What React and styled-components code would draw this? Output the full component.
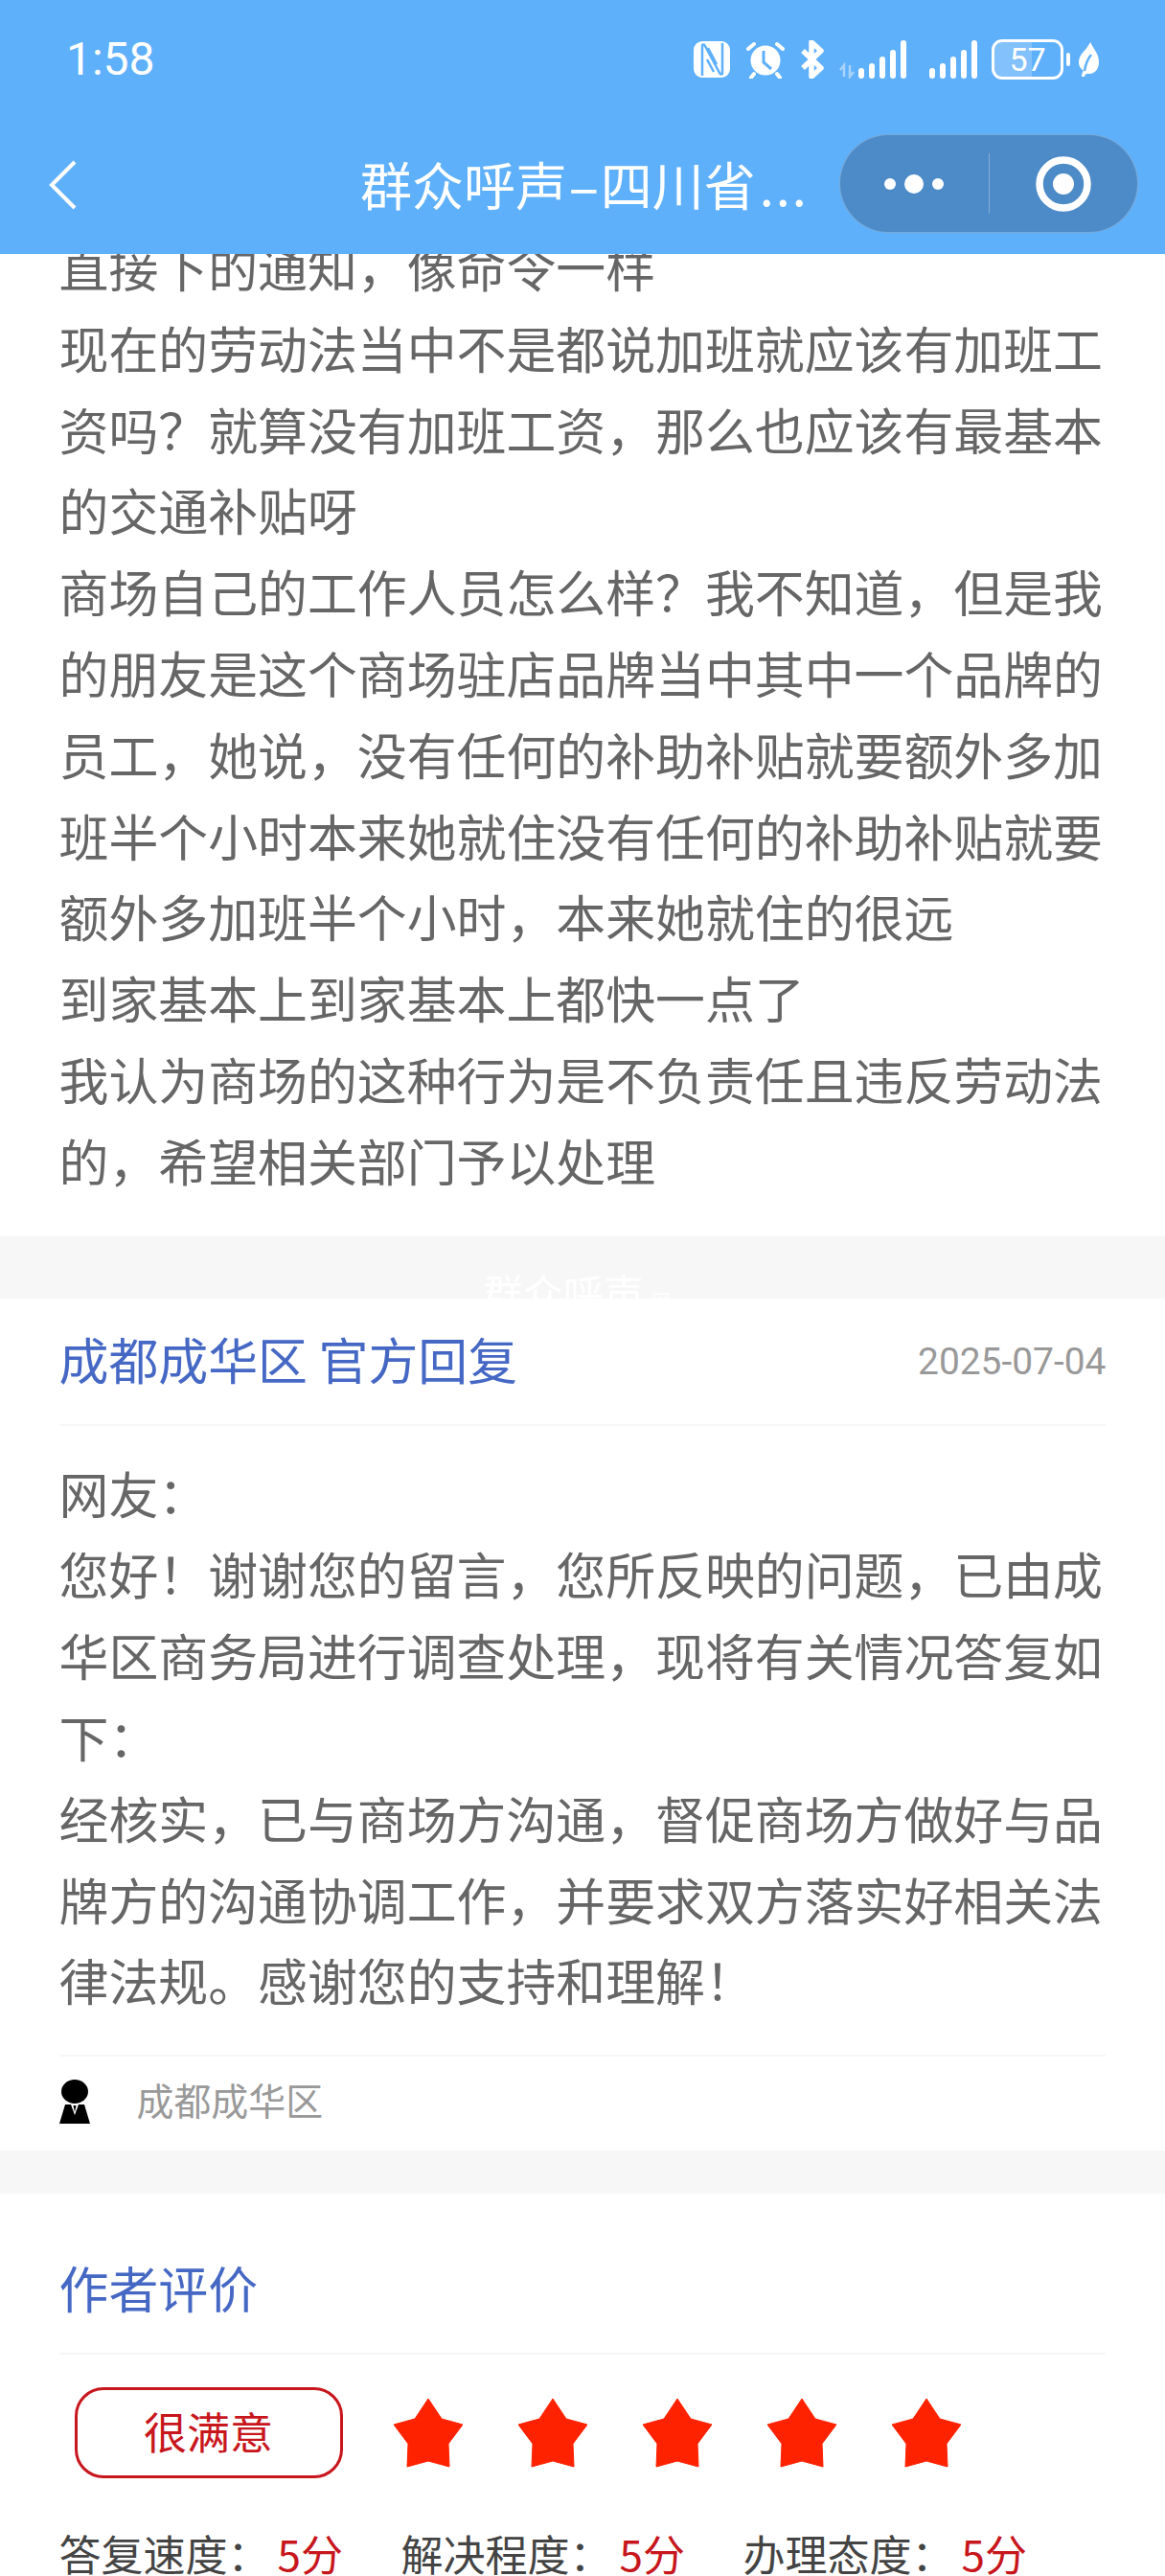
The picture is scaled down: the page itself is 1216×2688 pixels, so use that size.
import React from 'react'
import styled, { createGlobalStyle } from 'styled-components'

const GlobalStyle = createGlobalStyle`
    html, body {
        margin: 0;
        padding: 0;
        background: #fff;
        font-family: "Noto Sans CJK SC", "Noto Sans", sans-serif;
    }
`

const Screen = styled.div`
    width: 1216px;
    height: 2688px;
    overflow: hidden;
    display: flex;
    flex-direction: column;
    background: #fff;
`

const Header = styled.header`
    flex: none;
    height: 265px;
    background: #5fb0fa;
    color: #fff;
    display: flex;
    flex-direction: column;
`

const StatusBar = styled.div`
    height: 124px;
    padding: 0 69px;
    display: flex;
    align-items: center;
    justify-content: space-between;
`

const Clock = styled.span`
    font-family: Roboto, sans-serif;
    font-size: 48px;
    line-height: 1;
`

const StatusIcons = styled.div`
    display: flex;
    align-items: center;
`

const StatusItem = styled.div`
    display: flex;
    margin-left: ${props => props.$gap || 0}px;
`

const Battery = styled.div`
    width: 75px;
    height: 42px;
    box-sizing: border-box;
    border: 3px solid #fff;
    border-radius: 11px;
    display: flex;
    align-items: center;
    justify-content: center;
    font-family: Roboto, sans-serif;
    font-size: 34px;
    background: linear-gradient(90deg, rgba(255,255,255,0.22) 56%, transparent 56%);
`

const BatteryNub = styled.span`
    width: 4px;
    height: 14px;
    border-radius: 2px;
    background: #fff;
`

const NavBar = styled.div`
    height: 141px;
    display: flex;
    align-items: flex-start;
    padding-left: 51px;
`

const Back = styled.svg`
    width: 30px;
    height: 52px;
    margin-top: 43px;
    flex: none;
`

const NavTitle = styled.div`
    margin-left: 295px;
    margin-top: 30px;
    font-size: 54px;
    line-height: 76px;
    white-space: nowrap;
`

// the dash is wider in this font than in ours
const TitleDash = styled.span`
    display: inline-block;
    margin: 0 8px;
    transform: scaleX(1.9);
`

const TitleDots = styled.span`
    letter-spacing: 2px;
    margin-left: 4px;
`

const Capsule = styled.div`
    width: 312px;
    height: 103px;
    margin: 16px 28px 0 auto;
    box-sizing: border-box;
    border: 1px solid rgba(255,255,255,0.25);
    border-radius: 52px;
    background: #4c8bc8;
    display: flex;
    align-items: center;
`

const CapsulePart = styled.div`
    flex: 1;
    display: flex;
    align-items: center;
    justify-content: center;
`

const CapsuleLine = styled.div`
    width: 1px;
    height: 63px;
    background: rgba(255,255,255,0.3);
`

const Dot = styled.span`
    width: ${props => props.$size}px;
    height: ${props => props.$size}px;
    border-radius: 50%;
    background: #fff;
    margin: 0 4.5px;
`

const Scroller = styled.main`
    flex: 1;
    min-height: 0;
    overflow: hidden;
`

// page is scrolled, first line goes under the header
const Content = styled.div`
    margin-top: -29px;
`

const Section = styled.section`
    padding: 0 61.6px;
    background: #fff;
`

const Paragraphs = styled.div`
    font-size: 51.88px;
    line-height: 84.8px;
    color: #666;
    padding-bottom: ${props => props.$bottom || 0}px;
`

const Gap = styled.div`
    height: ${props => props.$h}px;
    background: #f7f7f7;
    position: relative;
    overflow: hidden;
`

const GhostText = styled.span`
    position: absolute;
    left: 504px;
    top: 33px;
    font-size: 42px;
    line-height: 50px;
    color: #fff;
    white-space: nowrap;
`

const GhostSmall = styled.span`
    font-size: 20px;
    margin-left: 8px;
`

const ReplyHead = styled.div`
    height: 133px;
    box-sizing: border-box;
    border-bottom: 2px solid #f6f6f6;
    display: flex;
    align-items: center;
    justify-content: space-between;
`

const BlueTitle = styled.h2`
    margin: 0;
    font-size: 51.88px;
    font-weight: 400;
    line-height: 76px;
    color: #4668c5;
`

const ReplyTitle = styled(BlueTitle)`
    margin-bottom: 5px;
`

const DateText = styled.span`
    font-family: Roboto, sans-serif;
    font-size: 38.9px;
    color: #999;
`

const ReplyBody = styled(Paragraphs)`
    padding-top: 28px;
    padding-bottom: 35px;
`

const Author = styled.div`
    height: 100px;
    border-top: 2px solid #f6f6f6;
    box-sizing: border-box;
    padding-bottom: 4px;
    display: flex;
    align-items: center;
    gap: 49px;
    font-size: 38.9px;
    color: #999;
`

const AuthorName = styled.span`
    margin-bottom: 6px;
`

const AuthorIcon = styled.svg`
    width: 32px;
    height: 46px;
    flex: none;
`

const RatingHead = styled.div`
    height: 168px;
    box-sizing: border-box;
    border-bottom: 2px solid #f6f6f6;
    padding-top: 60px;
`

const RatingRow = styled.div`
    display: flex;
    align-items: center;
    padding: 34px 0 0 16px;
`

const Mood = styled.div`
    width: 280px;
    height: 95px;
    box-sizing: border-box;
    border: 3.5px solid #c8161d;
    border-radius: 30px;
    padding-bottom: 5px;
    color: #c8161d;
    font-size: 45px;
    display: flex;
    align-items: center;
    justify-content: center;
`

const Stars = styled.div`
    display: flex;
    gap: 58px;
    margin-left: 53px;
`

const Star = styled.svg`
    width: 72px;
    height: 72px;
    display: block;
`

const Scores = styled.div`
    display: flex;
    padding-top: 43px;
    font-size: 44px;
    line-height: 70px;
    color: #444;
`

const Score = styled.div`
    width: 357px;
    white-space: nowrap;
`

const ScoreValue = styled.span`
    color: #c8161d;
    margin-left: 8px;
`

const NfcIcon = () => (
    <svg width="38" height="38" viewBox="0 0 38 38">
        <rect width="38" height="38" rx="9" fill="#fff" />
        <path d="M9 36V5c0-2 2-2 3 0l15 28c1 2 3 2 3 0V2" stroke="#5fb0fa" strokeWidth="2.5" fill="none" />
        <path d="M15 7l9 17M14 19l7 13" stroke="#5fb0fa" strokeWidth="2.5" fill="none" />
    </svg>
)

const AlarmIcon = () => (
    <svg width="42" height="40" viewBox="0 0 42 40">
        <circle cx="21" cy="21" r="15.5" fill="#fff" />
        <path d="M3 9l6-5M39 9l-6-5M9 35l-3 4M33 35l3 4" stroke="#fff" strokeWidth="4" strokeLinecap="round" />
        <path d="M19 11v12l8 7" stroke="#5fb0fa" strokeWidth="3" fill="none" />
    </svg>
)

const BluetoothIcon = () => (
    <svg width="26" height="40" viewBox="0 0 26 40">
        <path d="M3 11l19 18-10 9V2l10 9L3 29" stroke="#fff" strokeWidth="5.5" fill="none" strokeLinejoin="round" />
    </svg>
)

const Signal = ({ arrows }) => (
    <svg width={arrows ? 70 : 50} height="40" viewBox={arrows ? '-20 0 70 40' : '0 0 50 40'}>
        {arrows && <path d="M-15 38V26l-4 5M-9 26v12l4-5" stroke="#fff" strokeOpacity="0.45" strokeWidth="2.5" fill="none" />}
        <rect x="0" y="29" width="6" height="11" rx="3" fill="#fff" />
        <rect x="11" y="24" width="6" height="16" rx="3" fill="#fff" />
        <rect x="22" y="17" width="6" height="23" rx="3" fill="#fff" />
        <rect x="33" y="10" width="6" height="30" rx="3" fill="#fff" />
        <rect x="44" y="0" width="6" height="40" rx="3" fill="#fff" />
    </svg>
)

const LeafIcon = () => (
    <svg width="21" height="36" viewBox="0 0 21 36">
        <path d="M12 0C16 8 21 12 21 21c0 8-5 12-10 12-2 0-4-1-5 3H3c0-3 1-5 2-6C1 27 0 24 0 21 0 12 8 9 12 0z" fill="#fff" />
        <path d="M6 30c1-7 3-12 7-17" stroke="#5fb0fa" strokeWidth="2.5" fill="none" />
    </svg>
)

const starPoints = '36,0 50,21 72,27 57,47 58,71 36,65 14,71 15,47 0,27 22,21'

function RatingStar() {
    return (
        <Star viewBox="0 0 72 72">
            <polygon points={starPoints} fill="#ff2200" stroke="#ff2200" strokeWidth="1" strokeLinejoin="round" />
        </Star>
    )
}

const complaint = [
    '直接下的通知，像命令一样',
    '现在的劳动法当中不是都说加班就应该有加班工资吗？就算没有加班工资，那么也应该有最基本的交通补贴呀',
    '商场自己的工作人员怎么样？我不知道，但是我的朋友是这个商场驻店品牌当中其中一个品牌的员工，她说，没有任何的补助补贴就要额外多加班半个小时本来她就住没有任何的补助补贴就要额外多加班半个小时，本来她就住的很远',
    '到家基本上到家基本上都快一点了',
    '我认为商场的这种行为是不负责任且违反劳动法的，希望相关部门予以处理',
]

const reply = [
    '网友：',
    '您好！谢谢您的留言，您所反映的问题，已由成华区商务局进行调查处理，现将有关情况答复如下：',
    '经核实，已与商场方沟通，督促商场方做好与品牌方的沟通协调工作，并要求双方落实好相关法律法规。感谢您的支持和理解！',
]

const scores = ['答复速度', '解决程度', '办理态度']

export default function App() {
    return (
        <Screen>
            <GlobalStyle />
            <Header>
                <StatusBar>
                    <Clock>1:58</Clock>
                    <StatusIcons>
                        <StatusItem><NfcIcon /></StatusItem>
                        <StatusItem $gap={16}><AlarmIcon /></StatusItem>
                        <StatusItem $gap={15}><BluetoothIcon /></StatusItem>
                        <StatusItem $gap={15}><Signal arrows /></StatusItem>
                        <StatusItem $gap={24}><Signal /></StatusItem>
                        <StatusItem $gap={15}><Battery>57</Battery></StatusItem>
                        <StatusItem $gap={3}><BatteryNub /></StatusItem>
                        <StatusItem $gap={9}><LeafIcon /></StatusItem>
                    </StatusIcons>
                </StatusBar>
                <NavBar>
                    <Back viewBox="0 0 30 52">
                        <path d="M27 2L3 26l24 24" stroke="#fff" strokeWidth="4" fill="none" />
                    </Back>
                    <NavTitle>群众呼声<TitleDash>-</TitleDash>四川省<TitleDots>...</TitleDots></NavTitle>
                    <Capsule>
                        <CapsulePart>
                            <Dot $size={12} />
                            <Dot $size={20} />
                            <Dot $size={12} />
                        </CapsulePart>
                        <CapsuleLine />
                        <CapsulePart>
                            <svg width="58" height="58" viewBox="0 0 58 58">
                                <circle cx="29" cy="29" r="25" stroke="#fff" strokeWidth="7.5" fill="none" />
                                <circle cx="29" cy="29" r="11" fill="#fff" />
                            </svg>
                        </CapsulePart>
                    </Capsule>
                </NavBar>
            </Header>
            <Scroller>
                <Content>
                    <Section>
                        <Paragraphs $bottom={36}>
                            {complaint.map(t => <div key={t}>{t}</div>)}
                        </Paragraphs>
                    </Section>
                    <Gap $h={65}>
                        <GhostText>群众呼声<GhostSmall>网</GhostSmall></GhostText>
                    </Gap>
                    <Section>
                        <ReplyHead>
                            <ReplyTitle>成都成华区 官方回复</ReplyTitle>
                            <DateText>2025-07-04</DateText>
                        </ReplyHead>
                        <ReplyBody>
                            {reply.map(t => <div key={t}>{t}</div>)}
                        </ReplyBody>
                        <Author>
                            <AuthorIcon viewBox="0 0 32 46">
                                <ellipse cx="16" cy="12.5" rx="14" ry="12.5" fill="#000" />
                                <path d="M6 26h20l6 20H0z" fill="#000" />
                                <path d="M12 26h8l-4 11z" fill="#fff" />
                                <path d="M14.5 27h3l-1.5 7z" fill="#000" />
                            </AuthorIcon>
                            <AuthorName>成都成华区</AuthorName>
                        </Author>
                    </Section>
                    <Gap $h={45} />
                    <Section>
                        <RatingHead>
                            <BlueTitle>作者评价</BlueTitle>
                        </RatingHead>
                        <RatingRow>
                            <Mood>很满意</Mood>
                            <Stars>
                                {[0, 1, 2, 3, 4].map(i => <RatingStar key={i} />)}
                            </Stars>
                        </RatingRow>
                        <Scores>
                            {scores.map(s => (
                                <Score key={s}>{s}：<ScoreValue>5分</ScoreValue></Score>
                            ))}
                        </Scores>
                    </Section>
                </Content>
            </Scroller>
        </Screen>
    )
}
